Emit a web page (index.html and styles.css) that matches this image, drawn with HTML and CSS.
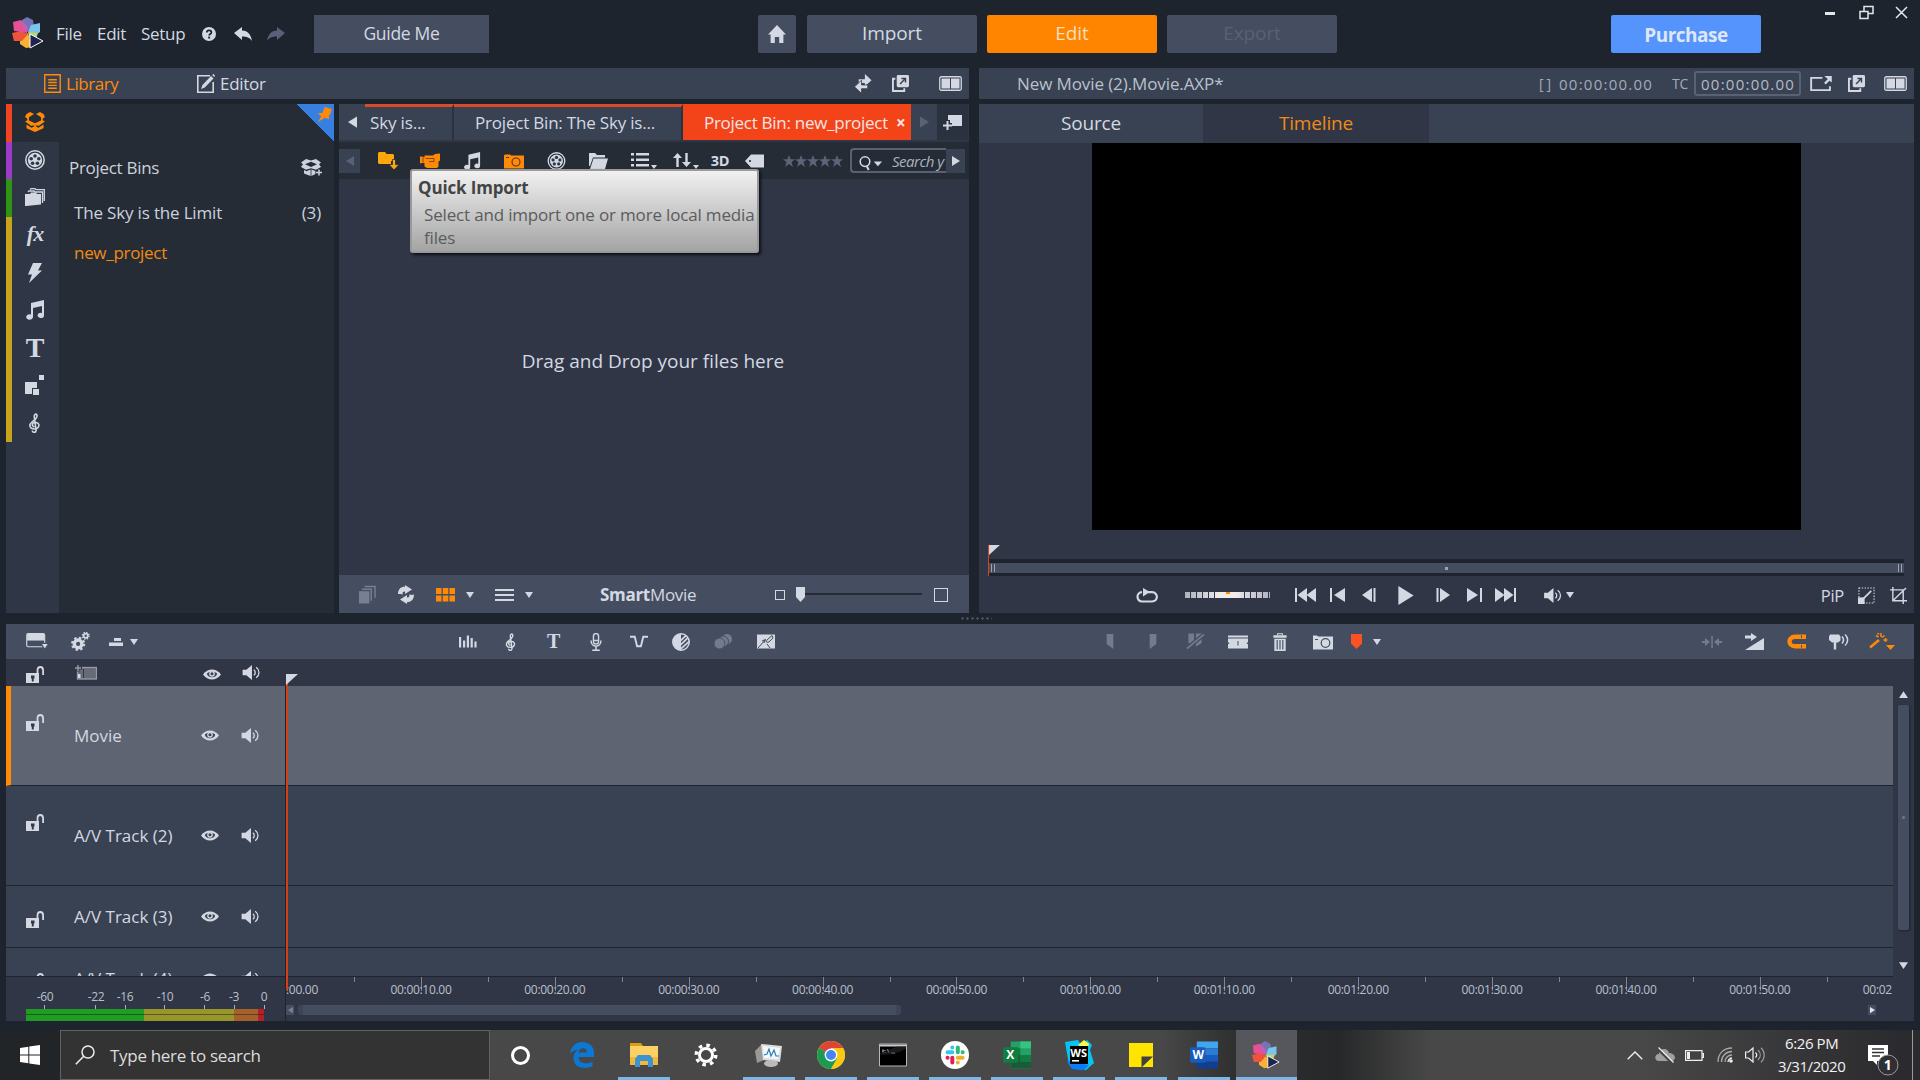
FILE: index.html
```html
<!DOCTYPE html>
<html lang="en">
<head>
<meta charset="utf-8">
<title>Video editor</title>
<link rel="stylesheet" href="styles.css">
</head>
<body>
<svg class="sprite" aria-hidden="true">
  <symbol id="flower" viewBox="0 0 32 32">
    <path fill="#7673b8" d="M10 3l5-3 6 3 1 7-7 5-5-6z"/>
    <path fill="#7cc4ea" d="M19 8l9-2v9l-6 4-6-4z"/>
    <path fill="#b9d66b" d="M16 15l10 1-2 6-6 1z"/>
    <path fill="#f9b233" d="M8 20l8-4 4 14-6 1-6-4z"/>
    <path fill="#ee5439" d="M0 16l9-2 7 3-6 7-8 0z"/>
    <path fill="#e84f96" d="M1 5l8-2 6 6 0 7-13-2z"/>
    <path fill="#b06bb4" d="M9 4l6 5 1 6-5-5z"/>
    <path fill="#1f2350" stroke="#fff" stroke-width="1" d="M18 17l13 7-13 7z"/>
  </symbol>
  <symbol id="help" viewBox="0 0 14 14"><circle cx="7" cy="7" r="7" fill="currentColor"/><path d="M4.8 5.6c0-3 4.6-2.8 4.6-.2 0 1.6-2.2 1.6-2.2 3" fill="none" stroke="#1d242d" stroke-width="1.7"/><rect x="6.2" y="9.6" width="1.9" height="1.9" fill="#1d242d"/></symbol>
  <symbol id="undo" viewBox="0 0 18 14"><path fill="currentColor" d="M0 6l8-6v3.400c6 .2 9 4 10 10.600-2.500-3.600-5-4.600-10-4.600V13z"/></symbol>
  <symbol id="home" viewBox="0 0 18 18"><path fill="currentColor" d="M9 0l9 9.500h-2.600V18h-4.200v-6H6.800v6H2.600V9.500H0z"/></symbol>
  <symbol id="library" viewBox="0 0 18 20"><path fill="none" stroke="currentColor" stroke-width="1.500" d="M.8.8h16.400v18.400H.8zM4.500 6h9M4.500 9h9M4.500 12h9M4.500 15h9"/></symbol>
  <symbol id="editor" viewBox="0 0 18 19"><path fill="none" stroke="currentColor" stroke-width="1.600" d="M13 1.800H.8v16.400h15.400V8"/><path fill="currentColor" d="M4 15l1.500-4L14 2l2.500 2.500-8.700 9z"/><path fill="currentColor" d="M15 1l1.500-1L18 1.700 17.200 3z"/></symbol>
  <symbol id="swap" viewBox="0 0 18 20"><path fill="currentColor" d="M11 0l7 6.500-7 6.500V9.500H4.500v-4H11z"/><path fill="currentColor" stroke="#394252" stroke-width=".9" d="M7.500 6.500L0 13.500l7.500 7V15.500H14v-4H7.500z"/><path fill="currentColor" d="M11 4.500v6.500l5-4.500z"/></symbol>
  <symbol id="popout" viewBox="0 0 18 18"><path fill="none" stroke="currentColor" stroke-width="2" d="M3.500 4H1v13h12v-3"/><rect x="5" y="0" width="13" height="13" rx="1.500" fill="currentColor"/><path fill="none" stroke="#394252" stroke-width="1.500" d="M8.500 9.500L14 4M10 3.700h4.300V8"/></symbol>
  <symbol id="dual" viewBox="0 0 23 15"><rect x=".75" y=".75" width="21.500" height="13.500" rx="1.500" fill="none" stroke="currentColor" stroke-width="1.300"/><path fill="currentColor" d="M2.500 2.500H11v10H2.500zM12 2.500h8.500v10H12z"/></symbol>
  <symbol id="expand" viewBox="0 0 23 16"><path fill="none" stroke="currentColor" stroke-width="2" d="M13 2H1v13h20v-4"/><path fill="currentColor" d="M15 0h8v7l-2.500-2-4 4-1.700-1.700 4-4z"/></symbol>
  <symbol id="box" viewBox="0 0 20 20"><path fill="currentColor" d="M5 0l4 2-5 3.200v2.600L0 5l1.500-3zM15 0l-4 2 5 3.200v2.600L20 5l-1.500-3zM0 9.500L3 8l7 3.200L17 8l3 1.500-6.500 4.500-3.500-1.800L6.500 14zM1.500 12.500l5 3.200L10 14l3.500 1.700 5-3.200v3.700L10 20l-8.500-3.800z"/><path fill="none" stroke="currentColor" stroke-width="1.500" d="M3 5v5l7 3.500 7-3.500V5M10 12.500V19"/></symbol>
  <symbol id="boxplus" viewBox="0 0 21 17"><path fill="currentColor" fill-rule="evenodd" d="M5 0l5 1.500L15 0l5 3.500-2 1.800L20 8l-5 2.800-5-1.500-5 1.500L0 8l2-2.700L0 3.500zM10 2.800L4 5.300 10 8l6-2.700zM3 11l2.500 1.200L9.600 10.500v6.500L3 14.500zM10.400 10.500l4 1.500v3l-4 2z"/><path stroke="currentColor" stroke-width="1.500" d="M18 10.500v6M15 13.500h6"/></symbol>
  <symbol id="pin" viewBox="0 0 16 16"><path fill="#ff8a08" d="M8 0l8 2-2 6-1.500 1 .5 4-4.500-1.500L1 16l3.500-6L1 7l5-1z"/></symbol>
  <symbol id="reel" viewBox="0 0 20 20"><circle cx="10" cy="10" r="9.200" fill="none" stroke="currentColor" stroke-width="1.500"/><circle cx="10" cy="10" r="7.200" fill="currentColor"/><g fill="#2f3646"><circle cx="10" cy="6" r="1.800"/><circle cx="13.800" cy="8.800" r="1.800"/><circle cx="12.400" cy="13.200" r="1.800"/><circle cx="7.600" cy="13.200" r="1.800"/><circle cx="6.200" cy="8.800" r="1.800"/></g></symbol>
  <symbol id="folders" viewBox="0 0 20 18"><path fill="currentColor" d="M0 6h5l1-1.500h5L12 6h4v10.500L1 18H0z"/><path fill="none" stroke="currentColor" stroke-width="1.300" d="M3 4l1-1h5l1 1h7.500v11M5 1.500L6 .7h4l1 1h8.300V13"/></symbol>
  <symbol id="bolt" viewBox="0 0 14 20"><path fill="currentColor" d="M5 0h9l-4 7.500h4L1 20l3-8.500H0z"/></symbol>
  <symbol id="note" viewBox="0 0 18 20"><path fill="currentColor" d="M5 3l13-3v15.500a3.200 2.600 0 1 1-2-2.500V6L7 8v9a3.400 2.700 0 1 1-2-2.500z"/></symbol>
  <symbol id="squares" viewBox="0 0 20 20"><path fill="currentColor" d="M14 0h5v5h-5zM0 7h12v6H7v6H0zM8 14h6v6H8z"/></symbol>
  <symbol id="clef" viewBox="0 0 14 20"><path fill="none" stroke="currentColor" stroke-width="1.600" d="M8 18c-.5 2-4 1.500-3.500-.5M8.200 18L6.300 4C6 1 8.500 0 9 2.500S6.500 7 4 9c-3.500 3-2.500 7 2.500 7s6-6 1.500-6.500-4.500 4-1.500 4.300"/></symbol>
  <symbol id="quickimport" viewBox="0 0 21 18"><path fill="currentColor" d="M0 1l1-1h6l1.500 2H15l1 1v6h-3v3H1l-1-1z"/><path fill="currentColor" stroke="#252c36" stroke-width=".8" d="M14.500 7.500h3v5H21L16 18l-5-5.500h3.500z"/></symbol>
  <symbol id="camcorder" viewBox="0 0 20 15"><path fill="currentColor" d="M4.500 2h8.500l2-1.500 5-.5v7l-1.500 1v5l-1.500 1.500H7L4.500 13V9.500H2L0 10V3h2l2.500 1z"/><path stroke="#8a4a05" stroke-width="1" fill="none" d="M3 4v5M5.500 5H14v3H9"/></symbol>
  <symbol id="photo" viewBox="0 0 20 15"><path fill="currentColor" d="M0 2l1-1h5l1 1h13v13H0z"/><circle cx="12" cy="8.500" r="4" fill="none" stroke="#50351a" stroke-width="1.100"/><path stroke="#50351a" d="M2 4h3"/></symbol>
  <symbol id="folder" viewBox="0 0 19 16"><path fill="currentColor" d="M0 0h6l2 2h8v2.500H4L1 13H0z"/><path fill="currentColor" d="M4.500 5.500H19L16 16H1z"/></symbol>
  <symbol id="list" viewBox="0 0 26 16"><path fill="currentColor" d="M0 0h3v2.500H0zM5 0h13v2.500H5zM0 5.500h3V8H0zM5 5.500h13V8H5zM0 11h3v2.500H0zM5 11h13v2.500H5zM20 12h6l-3 4z"/></symbol>
  <symbol id="sort" viewBox="0 0 26 16"><path fill="currentColor" d="M4.500 0L9 5H5.700v9H3.300V5H0zM13.500 14L9 9h3.300V0h2.400v9H18zM20 12h6l-3 4z"/></symbol>
  <symbol id="tag" viewBox="0 0 19 13"><path fill="currentColor" d="M6 0h13v13H6L0 6.500z"/><circle cx="5" cy="6.500" r="1.100" fill="#252c36"/></symbol>
  <symbol id="star" viewBox="0 0 20 20"><path fill="currentColor" d="M10 0l2.800 7H20l-5.700 4.600L16.500 20 10 15l-6.500 5 2.200-8.400L0 7h7.200z"/></symbol>
  <symbol id="addtab" viewBox="0 0 19 15"><path fill="currentColor" d="M5 0h14v11H9V8H7V5H5z"/><path stroke="currentColor" stroke-width="2" d="M4.500 6v9M0 10.500h9"/></symbol>
  <symbol id="right" viewBox="0 0 8 10"><path fill="currentColor" d="M0 0l8 5-8 5z"/></symbol>
  <symbol id="left" viewBox="0 0 8 10"><path fill="currentColor" d="M8 0L0 5l8 5z"/></symbol>
  <symbol id="down" viewBox="0 0 8 6"><path fill="currentColor" d="M0 0h8L4 6z"/></symbol>
  <symbol id="up" viewBox="0 0 8 6"><path fill="currentColor" d="M0 6h8L4 0z"/></symbol>
  <symbol id="mag" viewBox="0 0 26 17"><circle cx="6.500" cy="7" r="5.200" fill="none" stroke="currentColor" stroke-width="1.700"/><path stroke="currentColor" stroke-width="2.200" d="M8.500 12l2 4"/><path fill="currentColor" d="M16 7h9l-4.500 5z"/></symbol>
  <symbol id="stack" viewBox="0 0 18 19"><path fill="currentColor" d="M0 6h11v13H0z"/><path fill="none" stroke="currentColor" stroke-width="1.500" d="M3 4h10v12M6 1h11v12"/></symbol>
  <symbol id="refresh" viewBox="0 0 16 19"><path fill="currentColor" d="M0 9C0 4 3 1.500 7 1.700V0l7 4.500L7 9V6.500C4.500 6.500 4 8 5 9.500 3 9 1.500 9 0 9z"/><path fill="currentColor" d="M16 9.500c0 5-3 7.700-7 7.700V19l-7-4.500L9 10v2.500c2.500 0 3-1.500 2-3 2 .5 3.500.5 5 0z"/></symbol>
  <symbol id="thumbs" viewBox="0 0 19 14"><path fill="currentColor" d="M0 0h5.500v6H0zM6.800 0h5.500v6H6.800zM13.500 0H19v6h-5.500zM0 7.500h5.500v6H0zM6.800 7.500h5.500v6H6.800zM13.500 7.500H19v6h-5.500z"/></symbol>
  <symbol id="lines" viewBox="0 0 19 12"><path stroke="currentColor" stroke-width="1.800" d="M0 1h19M0 6h19M0 11h19"/></symbol>
  <symbol id="knob" viewBox="0 0 9 15"><path fill="currentColor" d="M0 0h9v10l-4.500 5L0 10z"/></symbol>
  <symbol id="loop" viewBox="0 0 22 15"><path fill="none" stroke="currentColor" stroke-width="2.200" d="M6 4.200c-6 0-6 9.300 0 9.300h10c6.500 0 6.500-9.300 0-9.300h-4"/><path fill="currentColor" d="M7 0l7 4-7 4.500z"/></symbol>
  <symbol id="tostart" viewBox="0 0 21 14"><path fill="currentColor" d="M0 0h2v14H0zM12 0v14L2.500 7zM21 0v14l-9.500-7z"/></symbol>
  <symbol id="prev" viewBox="0 0 15 14"><path fill="currentColor" d="M0 0h2v14H0zM15 0v14L4 7z"/></symbol>
  <symbol id="stepback" viewBox="0 0 15 14"><path fill="currentColor" d="M10 0v14L0 7zM11.500 0h2v14h-2z"/></symbol>
  <symbol id="play" viewBox="0 0 16 20"><path fill="currentColor" d="M0 0l16 10L0 20z"/></symbol>
  <symbol id="speaker" viewBox="0 0 19 16"><path fill="currentColor" d="M0 5h4l6-5v16l-6-5H0z"/><path fill="none" stroke="currentColor" stroke-width="1.400" d="M12 5c2 1.500 2 4.500 0 6M14.500 2.500c4 3 4 8 0 11"/></symbol>
  <symbol id="scale" viewBox="0 0 18 18"><rect x="1" y="1" width="16" height="16" fill="none" stroke="currentColor" stroke-width="1.200" stroke-dasharray="1.500 1.500"/><path fill="currentColor" d="M0 11h7v7H0z"/><path stroke="currentColor" stroke-width="1.800" d="M6 12l8-8"/></symbol>
  <symbol id="crop" viewBox="0 0 18 18"><path fill="none" stroke="currentColor" stroke-width="1.500" d="M3 0v14.500h15M0 3h14v15M3 14.500L17 1"/></symbol>
  <symbol id="tlview" viewBox="0 0 24 18"><rect x=".6" y=".6" width="19" height="14" rx="1.500" fill="none" stroke="currentColor" stroke-width="1.200"/><path fill="currentColor" d="M1 1h18.500v7H1z"/><path fill="currentColor" stroke="#454e60" stroke-width="1.300" d="M15.500 11H24l-4.200 6.500z"/></symbol>
  <symbol id="gears" viewBox="0 0 20 20"><circle cx="7.500" cy="12.500" r="4" fill="none" stroke="currentColor" stroke-width="3.600"/><circle cx="7.500" cy="12.500" r="6.400" fill="none" stroke="currentColor" stroke-width="2.200" stroke-dasharray="2.500 2.530"/><circle cx="15.500" cy="4" r="2.200" fill="none" stroke="currentColor" stroke-width="1.800"/><circle cx="15.500" cy="4" r="3.500" fill="none" stroke="currentColor" stroke-width="1.500" stroke-dasharray="1.400 1.350"/></symbol>
  <symbol id="tracks" viewBox="0 0 14 8"><path fill="currentColor" d="M5 0h7v3H5zM0 4.500h14V8H0z"/></symbol>
  <symbol id="mixer" viewBox="0 0 18 12"><path fill="currentColor" d="M0 1.500h2.200V12H0zM4 5h2.200v7H4zM7.800 0H10v12H7.800zM11.600 2.500h2.200V12h-2.200zM15.400 6h2.200v6h-2.200z"/></symbol>
  <symbol id="mic" viewBox="0 0 12 19"><rect x="3.300" y=".7" width="5.400" height="11" rx="2.700" fill="none" stroke="currentColor" stroke-width="1.500"/><path fill="none" stroke="currentColor" stroke-width="1.600" d="M.8 8c0 8 10.400 8 10.400 0M6 14v4M2 18.200h8M4 8h4"/></symbol>
  <symbol id="duck" viewBox="0 0 19 12"><path fill="none" stroke="currentColor" stroke-width="2" d="M0 1h5l2.500 10h4L14 1h5"/></symbol>
  <symbol id="mask" viewBox="0 0 19 19"><circle cx="9.500" cy="9.500" r="8.700" fill="none" stroke="currentColor" stroke-width="1.500"/><path fill="currentColor" d="M9.500.8a8.700 8.700 0 0 0 0 17.400z"/><path stroke="currentColor" stroke-width="1.800" d="M9 8l6-5.500M9 12.500l8-7.500M9 17l9-8"/></symbol>
  <symbol id="blobs" viewBox="0 0 19 16"><g fill="currentColor" stroke="#454e60"><circle cx="13" cy="5.500" r="5.500"/><circle cx="9" cy="8" r="5.500"/><circle cx="5.500" cy="10" r="5.500"/></g></symbol>
  <symbol id="paint" viewBox="0 0 18 14"><path fill="currentColor" d="M0 0h18v14H0z"/><path fill="none" stroke="#454e60" stroke-width="1" d="M1 13.500L8.500 5 5 6.500M8.500 5L7 8.500M15 1l-5 4.500c-2 3 1 3 3 1L16 3.500zM10 9.500l3 4"/></symbol>
  <symbol id="markin" viewBox="0 0 8 18"><path fill="currentColor" d="M0 0h8v18l-8-6z"/></symbol>
  <symbol id="markout" viewBox="0 0 8 18"><path fill="currentColor" d="M0 0h8v12l-8 6z"/></symbol>
  <symbol id="razor" viewBox="0 0 20 17"><path fill="currentColor" d="M2.500 0h6v13l-6-3zM10.500 0h6v10l-6 4z"/><path stroke="#454e60" stroke-width="4.500" d="M1 16L19 1"/><path stroke="currentColor" stroke-width="1.900" d="M1 16L19 1"/></symbol>
  <symbol id="trim" viewBox="0 0 20 13"><path fill="currentColor" d="M0 0h20v2H0zM0 3h20v10H0z"/><path fill="#454e60" d="M9.500 5.500h1v4.500h-1zM0 7h1.200v1.500H0zM18.800 7H20v1.500h-1.200z"/></symbol>
  <symbol id="trash" viewBox="0 0 14 19"><path fill="none" stroke="currentColor" stroke-width="1.200" d="M4.500 2.500V.8h5v1.700"/><path fill="currentColor" d="M0 2.500h14V5H0zM1 6h12v13H1z"/><path stroke="#454e60" stroke-width="1.200" d="M4 7.500v10M7 7.500v10M10 7.500v10"/></symbol>
  <symbol id="snap" viewBox="0 0 20 15"><path fill="currentColor" d="M0 1h4l1 1h15v13H0z"/><circle cx="12.500" cy="8.500" r="4.300" fill="none" stroke="#454e60" stroke-width="1.200"/><path stroke="#454e60" d="M2 5h3"/></symbol>
  <symbol id="marker" viewBox="0 0 11 15"><path fill="#fb5224" d="M0 0h11v9.500L5.500 15 0 9.500z"/></symbol>
  <symbol id="close-gap" viewBox="0 0 20 12"><path fill="currentColor" d="M9.300 0h1.500v12H9.300zM0 5h3V2l5 4-5 4V7H0zM20 5h-3V2l-5 4 5 4V7h3z"/></symbol>
  <symbol id="smart" viewBox="0 0 19 17"><path fill="currentColor" d="M19 5v12H0zM0 2.500h6V0l6 4-6 4V5.500H0z"/></symbol>
  <symbol id="magnet" viewBox="0 0 19 14"><path fill="none" stroke="currentColor" stroke-width="4.400" d="M19 2.200H8c-7.300 0-7.300 9.600 0 9.600h11"/><path stroke="#454e60" stroke-width="1" d="M14.500 .8v2.800M14.500 10.400v2.800"/></symbol>
  <symbol id="scrubaudio" viewBox="0 0 20 15"><path fill="currentColor" d="M1 0h9l1.500 2v4L9 8H7.200v7H4.800V8H3L0 5.500V2z"/><path fill="none" stroke="currentColor" stroke-width="1.500" d="M13 2c2 2 2 5 0 7M16 0c3.500 3 3.500 8 0 11"/></symbol>
  <symbol id="wand" viewBox="0 0 26 17"><path stroke="currentColor" stroke-width="2.500" d="M1 14.500L10 7"/><path stroke="currentColor" stroke-width="1.500" d="M12 0v4M14.500 7h4M16.500 5v4M7 2.500l2.500 1.500M13 4.500l2.500-2M8.500 0l1.500 1.500"/><path fill="currentColor" d="M17 12h9l-4.500 5z"/></symbol>
  <symbol id="lock" viewBox="0 0 18 17"><path fill="currentColor" d="M0 7h13v10H0z"/><path fill="none" stroke="currentColor" stroke-width="1.800" d="M11.500 7V4.500c0-4.700 5.600-4.700 5.600 0V9"/><path fill="#2f3646" d="M5 9.500h3.500v3H7.700v3H5.800v-3H5z"/></symbol>
  <symbol id="addtrack" viewBox="0 0 22 15"><rect x="2.500" y="2.500" width="19" height="11.500" fill="#666b75" stroke="currentColor" stroke-width="1.300"/><path stroke="#2f3646" stroke-width="3" d="M3 0v6.500M0 3h7"/><path stroke="currentColor" stroke-width="1.400" d="M3 0v6M0 3h6"/><path stroke="#2f3646" stroke-width="1" d="M8.500 4v9"/><path fill="#d3d8e2" d="M3 9h2.500v4H3z"/></symbol>
  <symbol id="eye" viewBox="0 0 18 11"><path fill="currentColor" d="M0 5.500C5-1.300 13-1.300 18 5.500c-5 6.800-13 6.800-18 0z"/><path fill="#394252" d="M4 4.500C5.500 2 12.500 2 14 4.500c0 5-10 5-10 0z"/><circle cx="9" cy="4.800" r="2.200" fill="none" stroke="currentColor" stroke-width="1.300"/></symbol>
  <symbol id="flag" viewBox="0 0 12 11"><path fill="currentColor" d="M0 0h12L0 11z"/></symbol>
  <symbol id="win" viewBox="0 0 20 20"><path fill="#fff" d="M0 3l8.300-1.200v7.700H0zM9.300 1.600L20 0v9.500H9.300zM0 10.500h8.300v7.700L0 17zM9.300 10.500H20V20L9.300 18.400z"/></symbol>
  <symbol id="tsearch" viewBox="0 0 20 20"><circle cx="13" cy="7" r="6" fill="none" stroke="#eee" stroke-width="1.500"/><path stroke="#eee" stroke-width="1.600" d="M8.500 11.500L.8 19.200"/></symbol>
  <symbol id="edge" viewBox="0 0 24 26"><path fill="#0a78d4" d="M0 12C1 4 6 0 12 0c8 0 12 5 12 11v4H8.500c0 7 9 8 14 4.500V24c-6 3.500-19 3-19-8 0-4 2-7 5-8.500C6 7.800 2 9 0 12zm8.500-1.500H17C17 4.500 9 5 8.500 10.500z"/></symbol>
  <symbol id="explorer" viewBox="0 0 28 24"><path fill="#d99c13" d="M0 0h11l2 3H0z"/><path fill="#fcd065" d="M0 3h28v18H0z"/><path fill="#f0b93c" d="M0 14h28v8H0z"/><path fill="#3d93cf" d="M5 24v-8l3-4h12l3 4v8h-5v-6h-8v6z"/></symbol>
  <symbol id="cog" viewBox="0 0 24 24"><circle cx="12" cy="12" r="6.500" fill="none" stroke="#fff" stroke-width="3"/><circle cx="12" cy="12" r="9.800" fill="none" stroke="#fff" stroke-width="3.400" stroke-dasharray="3.500 4.200"/></symbol>
  <symbol id="monitor" viewBox="0 0 28 26"><path fill="#999" d="M0 9l7-7 2 16-7 3z"/><path fill="#ddd" d="M6 2l21 2-2 16-17-2z"/><path fill="#f6f8fa" d="M8 4l17 2-2 11-14-1z"/><path fill="none" stroke="#257fbc" stroke-width="1.200" d="M9 13l3-1 2-5 2 7 3-6 2 6h3"/><ellipse cx="16" cy="21.500" rx="7" ry="3.500" fill="#bbb"/></symbol>
  <symbol id="chrome" viewBox="0 0 28 28"><circle cx="14" cy="14" r="14" fill="#fbc816"/><path fill="#db4437" d="M14 14L1.900 7A14 14 0 0 1 26.100 7H14z"/><path fill="#199a55" d="M1.900 7A14 14 0 0 0 14 28l6-10.500-6-3.500z"/><path fill="#fbc816" d="M26.100 7A14 14 0 0 1 14 28l6-10V7z"/><circle cx="14" cy="14" r="6.400" fill="#fff"/><circle cx="14" cy="14" r="5" fill="#4285f4"/></symbol>
  <symbol id="term" viewBox="0 0 28 23"><path fill="#000" stroke="#b5b8bc" d="M.5.5h27v22H.5z"/><path fill="#c8cbd0" d="M1 1h26v2H1z"/><path stroke="#ccc" stroke-width="1.200" d="M4 6v3M6 6.500v.8M6 8.500v.8M8.500 6l1.500 3M12 9.500h4"/><path fill="#252525" d="M1 11c9 1 18-1 26-6v-2H18L1 10z" opacity=".7"/></symbol>
  <symbol id="slack" viewBox="0 0 28 28"><circle cx="14" cy="14" r="14" fill="#fff"/><g fill="none" stroke-width="4" stroke-linecap="round"><path stroke="#36c5f0" d="M11.300 6.500v.1M6.500 11.300h4.800"/><path stroke="#2eb67d" d="M16.800 6.500v4.800M21.600 11.300h.1"/><path stroke="#ecb22e" d="M16.800 16.800h4.800M16.800 21.500v.1"/><path stroke="#e01e5a" d="M11.300 16.800v4.800M6.500 16.800h.1"/></g></symbol>
  <symbol id="excel" viewBox="0 0 29 28"><path fill="#21a366" d="M8 0h21v28H8z"/><path fill="#33c481" d="M18 0h11v7H18z"/><path fill="#107c41" d="M8 7h10v7H8zM18 14h11v7H18z"/><path fill="#185c37" d="M8 14h10v7h11v7H8z"/><rect y="6" width="16" height="16" rx="1.500" fill="#107c41"/></symbol>
  <symbol id="word" viewBox="0 0 29 28"><path fill="#41a5ee" d="M7 0h22v7H7z"/><path fill="#2b7cd3" d="M7 7h22v7H7z"/><path fill="#185abd" d="M7 14h22v7H7z"/><path fill="#103f91" d="M7 21h22v7H7z"/><rect y="6" width="16" height="16" rx="1.500" fill="#185abd"/></symbol>
  <symbol id="storm" viewBox="0 0 30 30"><path fill="#07c3f2" d="M1 2l13-2 3 5 6-5 5 5-2 5 4 13-8 7-12-1-5-4z"/><path fill="#fcf84a" d="M14 5l6-5 5 4-2 6z"/><path fill="#087cfa" d="M3 21l22 4-5 5-12-1z"/><path fill="#000" d="M6 6h18v18H6z"/><path fill="#fff" d="M8 20h7v1.600H8z"/></symbol>
  <symbol id="sticky" viewBox="0 0 23 23"><path fill="#ffe400" d="M0 0h23v23H0z"/><path fill="#404040" d="M12 13h11L12.500 23H12z"/></symbol>
  <symbol id="chev" viewBox="0 0 16 9"><path fill="none" stroke="#eee" stroke-width="1.400" d="M.7 8.200L8 1l7.300 7.200"/></symbol>
  <symbol id="cloud" viewBox="0 0 20 16"><path fill="#a0a0a0" d="M4 14C-1 14-1 7 4 7c0-6 9-7 10-1 7 0 8 8 2 8z"/><path stroke="#444" stroke-width="2.500" d="M3 2l14 14"/><path stroke="#eee" stroke-width="1.300" d="M3.500.5l15 15"/></symbol>
  <symbol id="battery" viewBox="0 0 19 11"><path fill="none" stroke="#eee" stroke-width="1.200" d="M.6.600h16.400v9.800H.6zM17 3.500h1.400v4H17"/><path fill="#eee" d="M2 2h3v7H2z"/></symbol>
  <symbol id="wifi" viewBox="0 0 16 16"><g fill="none" stroke="#aaa" stroke-width="1.300"><path d="M1 15C1 6 7 1 15 1M4.500 15C4.500 9 9 4.500 15 4.500M8 15c0-4 3-7 7-7"/><path stroke="#eee" d="M11 15c0-2 2-4 4-4"/></g><circle cx="14" cy="14" r="1.800" fill="#eee"/></symbol>
  <symbol id="tvol" viewBox="0 0 20 16"><path fill="none" stroke="#eee" stroke-width="1.200" d="M.6 5h3L8 1v14l-4.400-4h-3z"/><path fill="none" stroke="#eee" stroke-width="1.200" d="M10.500 5.500c1.500 1.500 1.500 3.500 0 5"/><path fill="none" stroke="#999" stroke-width="1.200" d="M13 3c3 3 3 7 0 10M16 .800c4.300 4 4.300 10.400 0 14.400"/></symbol>
  <symbol id="notif" viewBox="0 0 31 31"><path fill="#fff" d="M0 0h20v16H9v4l-4-4H0z"/><path stroke="#333" stroke-width="1.400" d="M4 4h12M4 7.500h12M4 11h8"/><circle cx="20" cy="20" r="10" fill="#303033" stroke="#999"/></symbol>
</svg>

<header class="topbar">
  <svg class="logo"><use href="#flower"/></svg>
  <nav class="menu">
    <span class="m-file">File</span><span class="m-edit">Edit</span><span class="m-setup">Setup</span>
    <svg class="i-help"><use href="#help"/></svg>
    <svg class="i-undo"><use href="#undo"/></svg>
    <svg class="i-undo redo"><use href="#undo"/></svg>
  </nav>
  <button class="guide">Guide Me</button>
  <div class="modes">
    <button class="home"><svg><use href="#home"/></svg></button>
    <button class="mode">Import</button>
    <button class="mode on">Edit</button>
    <button class="mode off">Export</button>
  </div>
  <button class="purchase">Purchase</button>
  <svg class="winctl" viewBox="0 0 90 20"><g fill="none" stroke="#e4e6ea" stroke-width="1.500"><path stroke-width="3" d="M4 10.500h10"/><path d="M39 8.500h8v7h-8zM43 8.500v-5h9v7h-5M75 4l11 11M86 4L75 15"/></g></svg>
</header>

<main class="work">
  <section class="left">
    <div class="phead">
      <span class="ptab lib"><svg><use href="#library"/></svg>Library</span>
      <span class="ptab edt"><svg><use href="#editor"/></svg>Editor</span>
      <span class="pic"><svg class="i-swap"><use href="#swap"/></svg><svg class="i-pop"><use href="#popout"/></svg><svg class="i-dual"><use href="#dual"/></svg></span>
    </div>
    <div class="lbody">
      <aside class="side">
        <div class="cols"><i class="red"></i><i class="purple"></i><i class="green"></i><i class="gold"></i></div>
        <div class="cats">
          <span class="cat sel"><svg><use href="#box"/></svg></span>
          <span class="cat"><svg><use href="#reel"/></svg></span>
          <span class="cat"><svg><use href="#folders"/></svg></span>
          <span class="cat fx">fx</span>
          <span class="cat"><svg><use href="#bolt"/></svg></span>
          <span class="cat"><svg><use href="#note"/></svg></span>
          <span class="cat tt">T</span>
          <span class="cat"><svg><use href="#squares"/></svg></span>
          <span class="cat"><svg><use href="#clef"/></svg></span>
        </div>
        <div class="bins">
          <div class="corner"><svg><use href="#pin"/></svg></div>
          <div class="binhead"><span>Project Bins</span><svg><use href="#boxplus"/></svg></div>
          <div class="bin first"><span>The Sky is the Limit</span><span>(3)</span></div>
          <div class="bin cur"><span>new_project</span></div>
        </div>
      </aside>
      <div class="browser">
        <div class="tabs">
          <span class="tnav"><svg><use href="#left"/></svg></span>
          <span class="tab t1">Sky is...</span>
          <span class="tab t2">Project Bin: The Sky is...</span>
          <span class="tab t3">Project Bin: new_project<b>×</b></span>
          <span class="tnav dim"><svg><use href="#right"/></svg></span>
          <span class="tadd"><svg><use href="#addtab"/></svg></span>
        </div>
        <div class="btools">
          <span class="bnav dim"><svg><use href="#left"/></svg></span>
          <span class="bt amber"><svg class="s21"><use href="#quickimport"/></svg></span>
          <span class="bt org"><svg class="s20"><use href="#camcorder"/></svg></span>
          <span class="bt"><svg class="s20"><use href="#note"/></svg></span>
          <span class="bt org"><svg class="s20"><use href="#photo"/></svg></span>
          <span class="bt"><svg class="s19"><use href="#reel"/></svg></span>
          <span class="bt"><svg class="s19"><use href="#folder"/></svg></span>
          <span class="bt w48"><svg class="s26"><use href="#list"/></svg></span>
          <span class="bt w35"><svg class="s26"><use href="#sort"/></svg></span>
          <span class="bt w34 d3">3D</span>
          <span class="bt w34"><svg class="s19"><use href="#tag"/></svg></span>
          <span class="stars"><svg><use href="#star"/></svg><svg><use href="#star"/></svg><svg><use href="#star"/></svg><svg><use href="#star"/></svg><svg><use href="#star"/></svg></span>
          <span class="search"><svg><use href="#mag"/></svg><em>Search y</em></span>
          <span class="bnav"><svg><use href="#right"/></svg></span>
        </div>
        <div class="drop">Drag and Drop your files here</div>
        <div class="bfoot">
          <span class="f1"><svg><use href="#stack"/></svg></span>
          <span class="f2"><svg><use href="#refresh"/></svg></span>
          <span class="f3"><svg><use href="#thumbs"/></svg></span>
          <svg class="dn"><use href="#down"/></svg>
          <span class="f4"><svg><use href="#lines"/></svg></span>
          <svg class="dn"><use href="#down"/></svg>
          <span class="smart"><b>Smart</b>Movie</span>
          <i class="sq"></i>
          <span class="slider"><svg><use href="#knob"/></svg></span>
          <i class="sq big"></i>
        </div>
        <div class="tip"><b>Quick Import</b><p>Select and import one or more local media files</p></div>
      </div>
    </div>
  </section>

  <section class="right">
    <div class="phead">
      <span class="title">New Movie (2).Movie.AXP*</span>
      <span class="br">[ ]</span><span class="tc">00:00:00.00</span><span class="tcl">TC</span><span class="tc box">00:00:00.00</span>
      <span class="ric"><svg class="i-exp"><use href="#expand"/></svg><svg class="i-pop"><use href="#popout"/></svg><svg class="i-dual"><use href="#dual"/></svg></span>
    </div>
    <div class="vtabs"><span>Source</span><span class="on">Timeline</span></div>
    <div class="viewer">
      <div class="video"></div>
      <div class="scrub">
        <svg class="sflag"><use href="#flag"/></svg>
        <div class="strip"><div class="bar"><i></i><i class="dot"></i><i></i></div></div>
      </div>
      <div class="transport">
        <svg class="p-loop"><use href="#loop"/></svg>
        <span class="jog"></span>
        <span class="pc w34b"><svg class="w21"><use href="#tostart"/></svg></span>
        <span class="pc w30"><svg class="w15"><use href="#prev"/></svg></span>
        <span class="pc w34b"><svg class="w15"><use href="#stepback"/></svg></span>
        <span class="pc w40"><svg class="w16"><use href="#play"/></svg></span>
        <span class="pc w34b"><svg class="w15 flip"><use href="#stepback"/></svg></span>
        <span class="pc w30"><svg class="w15 flip"><use href="#prev"/></svg></span>
        <span class="pc w34b"><svg class="w21 flip"><use href="#tostart"/></svg></span>
        <svg class="p-vol"><use href="#speaker"/></svg><svg class="dn"><use href="#down"/></svg>
        <span class="pip">PiP</span>
        <svg class="p-sc"><use href="#scale"/></svg><svg class="p-cr"><use href="#crop"/></svg>
      </div>
    </div>
  </section>
</main>

<div class="grip"></div>

<section class="timeline">
  <div class="ttools">
    <svg class="g1"><use href="#tlview"/></svg><svg class="g2"><use href="#gears"/></svg><svg class="g3"><use href="#tracks"/></svg><svg class="dn"><use href="#down"/></svg>
    <div class="grp a">
      <span><svg class="q18"><use href="#mixer"/></svg></span><span><svg class="q20"><use href="#clef"/></svg></span><span class="tser">T</span><span><svg class="q20"><use href="#mic"/></svg></span><span><svg class="q18"><use href="#duck"/></svg></span><span><svg class="q20"><use href="#mask"/></svg></span><span class="faint"><svg class="q19"><use href="#blobs"/></svg></span><span><svg class="q18"><use href="#paint"/></svg></span>
    </div>
    <div class="grp b">
      <span class="faint"><svg class="q18"><use href="#markin"/></svg></span><span class="faint"><svg class="q18"><use href="#markout"/></svg></span><span class="faint"><svg class="q19"><use href="#razor"/></svg></span><span><svg class="q20"><use href="#trim"/></svg></span><span><svg class="q20"><use href="#trash"/></svg></span><span><svg class="q20"><use href="#snap"/></svg></span>
    </div>
    <svg class="mk"><use href="#marker"/></svg><svg class="dn"><use href="#down"/></svg>
    <div class="grp c">
      <span class="faint"><svg class="q20"><use href="#close-gap"/></svg></span><span><svg class="q19"><use href="#smart"/></svg></span><span class="org"><svg class="q19"><use href="#magnet"/></svg></span><span><svg class="q20"><use href="#scrubaudio"/></svg></span><span class="org"><svg class="q26"><use href="#wand"/></svg></span>
    </div>
  </div>
  <div class="thead">
    <svg class="lock"><use href="#lock"/></svg><svg class="addt"><use href="#addtrack"/></svg><svg class="eye"><use href="#eye"/></svg><svg class="spk"><use href="#speaker"/></svg>
  </div>
  <div class="tbody">
    <div class="trackarea">
      <div class="track movie"><div class="th"><svg class="lock up"><use href="#lock"/></svg><span>Movie</span><svg class="eye"><use href="#eye"/></svg><svg class="spk"><use href="#speaker"/></svg></div></div>
      <div class="track tall"><div class="th"><svg class="lock up"><use href="#lock"/></svg><span>A/V Track (2)</span><svg class="eye"><use href="#eye"/></svg><svg class="spk"><use href="#speaker"/></svg></div></div>
      <div class="track short"><div class="th"><svg class="lock lo"><use href="#lock"/></svg><span>A/V Track (3)</span><svg class="eye"><use href="#eye"/></svg><svg class="spk"><use href="#speaker"/></svg></div></div>
      <div class="track cut"><div class="th"><svg class="lock lo"><use href="#lock"/></svg><span>A/V Track (4)</span><svg class="eye"><use href="#eye"/></svg><svg class="spk"><use href="#speaker"/></svg></div></div>
    </div>
    <div class="vscroll"><svg><use href="#up"/></svg><i></i><svg><use href="#down"/></svg></div>
  </div>
  <div class="tfoot">
    <div class="meter">
      <svg class="mscale" viewBox="0 0 280 32"><g class="mtext"><text x="39" y="24">-60</text><text x="90" y="24">-22</text><text x="119" y="24">-16</text><text x="159" y="24">-10</text><text x="199" y="24">-6</text><text x="228" y="24">-3</text><text x="258" y="24">0</text></g><path stroke="#a9b0bc" d="M38.500 28v4M89.500 28v4M119.500 28v4M158.500 28v4M198.500 28v4M228.500 28v4M258.500 28v4"/></svg>
      <div class="leds"><i class="lg"></i><i class="ly"></i><i class="lb"></i><i class="lr"></i></div>
    </div>
    <div class="rulerwrap">
      <div class="ruler">
        <span class="r0">:00.00</span><span>00:00:10.00</span><span>00:00:20.00</span><span>00:00:30.00</span><span>00:00:40.00</span><span>00:00:50.00</span><span>00:01:00.00</span><span>00:01:10.00</span><span>00:01:20.00</span><span>00:01:30.00</span><span>00:01:40.00</span><span>00:01:50.00</span><span class="r12">00:02</span>
      </div>
      <div class="hscroll"><b><svg><use href="#left"/></svg></b><i></i><b class="hr"><svg><use href="#right"/></svg></b></div>
    </div>
  </div>
  <div class="playhead"><svg><use href="#flag"/></svg></div>
</section>

<footer class="taskbar">
  <span class="start"><svg><use href="#win"/></svg></span>
  <div class="tsearch"><svg><use href="#tsearch"/></svg>Type here to search</div>
  <div class="apps">
    <span><i class="ring"></i></span>
    <span><svg class="a26"><use href="#edge"/></svg></span>
    <span class="run"><svg class="a28"><use href="#explorer"/></svg></span>
    <span><svg class="a24"><use href="#cog"/></svg></span>
    <span class="run"><svg class="a28"><use href="#monitor"/></svg></span>
    <span class="run"><svg class="a28"><use href="#chrome"/></svg></span>
    <span class="run"><svg class="a28"><use href="#term"/></svg></span>
    <span class="run"><svg class="a28"><use href="#slack"/></svg></span>
    <span class="run"><svg class="a28"><use href="#excel"/></svg><b class="ltr">X</b></span>
    <span class="run"><svg class="a30"><use href="#storm"/></svg><b class="ltr ws">WS</b></span>
    <span class="run"><svg class="a23"><use href="#sticky"/></svg></span>
    <span class="run"><svg class="a28"><use href="#word"/></svg><b class="ltr">W</b></span>
    <span class="run active"><svg class="a28"><use href="#flower"/></svg></span>
  </div>
  <div class="tray">
    <span><svg class="y1"><use href="#chev"/></svg></span><span><svg class="y2"><use href="#cloud"/></svg></span><span><svg class="y3"><use href="#battery"/></svg></span><span><svg class="y4"><use href="#wifi"/></svg></span><span><svg class="y5"><use href="#tvol"/></svg></span>
  </div>
  <div class="clock"><span>6:26 PM</span><span>3/31/2020</span></div>
  <div class="notif"><svg><use href="#notif"/></svg><b>1</b></div>
</footer>
</body>
</html>
```
FILE: styles.css
```css
* { box-sizing: border-box; }
body { margin: 0; width: 1920px; height: 1080px; overflow: hidden; position: relative; display: flex; flex-direction: column; background: #1d242d; color: #d3d8e2; font-family: "Open Sans", "Noto Sans", sans-serif; font-size: 17px; letter-spacing: -0.3px; white-space: nowrap; }
svg { display: block; flex: none; overflow: visible; }
.sprite { position: absolute; width: 0; height: 0; }
button { font: inherit; letter-spacing: inherit; border: 0; padding: 0 0 2px; color: inherit; display: flex; align-items: center; justify-content: center; }
.dn { width: 8px; height: 6px; }
.org { color: #ff8a08; }
.dim { color: #596273; }

/* top bar */
.topbar { height: 68px; flex: none; display: flex; align-items: center; position: relative; }
.logo { width: 32px; height: 32px; margin: -3px 0 0 12px; }
.menu { display: flex; align-items: center; width: 270px; padding: 0 0 1px 12px; height: 68px; }
.menu span { padding-bottom: 1px; }
.m-file { width: 41px; }
.m-edit { width: 44px; }
.m-setup { width: 61px; }
.i-help { width: 14px; height: 14px; margin-right: 18px; }
.i-undo { width: 18px; height: 14px; margin-right: 15px; }
.redo { transform: scaleX(-1); color: #596077; }
.guide { width: 175px; height: 38px; background: #454e60; font-size: 17.500px; }
.modes { display: flex; margin-left: 269px; gap: 10px; }
.home { width: 38px; height: 38px; background: #454e60; border-radius: 2px; margin-right: 1px; padding-bottom: 0; }
.home svg { width: 18px; height: 18px; }
.mode { width: 170px; height: 38px; background: #454e60; border-radius: 2px; font-size: 19px; letter-spacing: -0.1px; }
.mode.on { background: #ff8400; color: #f5dfbe; }
.mode.off { color: #596173; }
.purchase { margin-left: 274px; width: 150px; height: 38px; background: #5494fc; border-radius: 2px; font-weight: 700; font-size: 19px; padding: 1px 0 0; letter-spacing: -0.5px; color: #dfe6f5; }
.winctl { width: 90px; height: 20px; margin: -42px 0 0 60px; }

/* workspace */
.work { display: flex; gap: 10px; padding-left: 6px; height: 545px; flex: none; }
.left { width: 963px; }
.right { width: 935px; }
.phead { height: 31px; margin-bottom: 5px; background: #394252; display: flex; align-items: center; }
.ptab { display: flex; align-items: center; gap: 5px; }
.lib { color: #ff8a08; margin-left: 38px; width: 153px; letter-spacing: -0.45px; }
.lib svg { width: 17px; height: 19px; }
.edt { width: 657px; }
.edt svg { width: 18px; height: 19px; }
.pic { display: flex; align-items: center; }
.i-swap { width: 18px; height: 19px; margin-right: 20px; }
.i-pop { width: 17px; height: 17px; margin-right: 30px; }
.i-dual { width: 23px; height: 15px; }

.lbody { display: flex; gap: 5px; height: 509px; }
.side { width: 328px; display: flex; background: #252c36; }
.cols { width: 6px; display: flex; flex-direction: column; background: #2f3646; }
.red { height: 38px; background: #ef4523; }
.purple { height: 37px; background: #9b3bc8; }
.green { height: 38px; background: #2f9413; }
.gold { height: 225px; background: #c6a51d; }
.cats { width: 47px; background: #2f3646; }
.cat { height: 37.600px; display: flex; align-items: center; justify-content: center; padding: 0 1px 1px 0; }
.cat svg { width: 20px; height: 20px; }
.cat.sel { background: #252c36; color: #ff8a08; }
.fx { font: italic bold 22px "Liberation Serif", serif; letter-spacing: -1px; padding-bottom: 4px; }
.tt { font: bold 28px "Liberation Serif", serif; }
.bins { flex: 1; position: relative; color: #ccd2dd; }
.corner { position: absolute; right: 0; top: 0; width: 37px; height: 37px; background: linear-gradient(to top right, transparent 50%, #377fe0 50%); }
.corner svg { width: 15px; height: 15px; margin: 3px 0 0 20px; }
.binhead { margin: 50px 12px 0 10px; height: 26px; display: flex; justify-content: space-between; align-items: center; }
.binhead svg { width: 21px; height: 17px; }
.bin { margin: 0 13px 0 15px; height: 40px; display: flex; align-items: center; justify-content: space-between; }
.bin.first { margin-top: 12px; letter-spacing: -0.17px; }
.cur { color: #f08a14; }

.browser { width: 630px; background: #303646; position: relative; display: flex; flex-direction: column; }
.tabs { height: 38px; display: flex; align-items: flex-start; }
.tabs > span { height: 36px; display: flex; align-items: center; }
.tnav { width: 26px; justify-content: center; background: #394252; }
.tnav svg { width: 9px; height: 12px; }
.tabs > .tab { background: #394252; border-top: 3px solid #dd4a2b; border-right: 2px solid #2b323f; padding-bottom: 2px; }
.t1 { width: 89px; padding-left: 5px; letter-spacing: -0.15px; }
.t2 { width: 229px; padding-left: 21px; letter-spacing: -0.2px; }
.tabs > .t3 { width: 228px; padding-left: 21px; background: #f34318; border-color: #f34318; color: #f3e5e5; letter-spacing: -0.28px; }
.t3 b { margin-left: 8px; font-size: 17px; }
.tadd { width: 31px; justify-content: center; background: #2b323f; }
.tadd svg { width: 19px; height: 15px; }
.btools { height: 37px; background: #252c36; display: flex; align-items: center; }
.bnav { width: 21px; height: 24px; background: #394252; display: flex; align-items: center; justify-content: center; }
.bnav svg { width: 8px; height: 10px; }
.bnav:first-child { margin-right: 7px; }
.bt { width: 42px; display: flex; justify-content: center; align-items: center; }
.bt svg { height: 18px; }
.w48 { width: 49px; } .w35 { width: 35px; } .w34 { width: 34px; }
.amber { color: #ffa70a; }
.s21 { width: 21px; } .s20 { width: 20px; } .s19 { width: 19px; } .s26 { width: 26px; }
.d3 { font-size: 14.500px; font-weight: 700; }
.stars { display: flex; margin: 0 7px 0 12px; color: #5b6478; width: 60px; }
.stars svg { width: 12px; height: 12px; }
.search { width: 96px; height: 25px; border: 2px solid #596273; border-right: 0; border-radius: 4px 0 0 4px; display: flex; align-items: center; overflow: hidden; }
.search svg { width: 24px; height: 16px; margin: 4px 9px 0 7px; }
.search em { font-size: 15px; letter-spacing: -0.5px; color: #abb2c0; }
.search + .bnav { width: 19px; }
.drop { flex: 1; display: flex; justify-content: center; padding: 169px 2px 0 0; align-items: flex-start; font-size: 19px; letter-spacing: 0; }
.bfoot { height: 38px; background: #454e60; display: flex; align-items: center; padding-top: 1px; }
.f1 { margin-left: 20px; width: 39px; color: #778091; }
.f1 svg { width: 17px; height: 19px; }
.f2 { width: 38px; } .f2 svg { width: 16px; height: 19px; }
.f3 { width: 30px; color: #ff8a08; } .f3 svg { width: 19px; height: 14px; }
.f4 { width: 30px; margin-left: 21px; } .f4 svg { width: 19px; height: 12px; }
.smart { margin-left: 67px; width: 175px; }
.sq { width: 10px; height: 10px; border: 1.500px solid #d3d8e2; margin-right: 11px; }
.slider { width: 127px; height: 15px; background: linear-gradient(#252c36, #252c36) 0 6px / 126px 2px no-repeat; margin-right: 7px; }
.slider svg { width: 9px; height: 15px; }
.sq.big { width: 14px; height: 14px; margin-left: 4px; }
.tip { position: absolute; left: 71px; top: 65px; width: 349px; height: 84px; border: 2px solid #999; border-radius: 3px; background: linear-gradient(#f1f1f1, #a4a4a4); box-shadow: 2px 2px 3px #0c1018; color: #5c5c5c; padding: 6px 0 0 6px; line-height: 22px; }
.tip b { color: #444; display: block; letter-spacing: -0.15px; }
.tip p { margin: 4px 0 0 6px; width: 336px; white-space: normal; letter-spacing: -0.17px; line-height: 23px; }

/* viewer */
.title { margin-left: 38px; width: 522px; color: #b9c0cd; letter-spacing: -0.1px; }
.br { width: 20px; font-size: 14px; color: #a3abba; }
.tc { width: 113px; font-size: 15px; letter-spacing: 1.250px; color: #a3abba; }
.tcl { width: 22px; font-size: 14px; color: #a3abba; }
.tc.box { width: 107px; height: 25px; border: 2px solid #596273; border-radius: 3px; padding-left: 5px; display: flex; align-items: center; color: #b4bbc8; }
.ric { display: flex; align-items: center; margin-left: 9px; }
.i-exp { width: 22px; height: 15px; margin-right: 16px; }
.ric .i-pop { margin-right: 19px; }
.vtabs { height: 39px; background: #394252; display: flex; }
.vtabs span { width: 224px; display: flex; align-items: center; justify-content: center; font-size: 19px; letter-spacing: -0.15px; padding-bottom: 2px; }
.vtabs .on { width: 226px; background: #303646; color: #f08a14; }
.viewer { height: 470px; background: #303646; }
.video { width: 709px; height: 387px; margin-left: 113px; background: #000; }
.scrub { margin: 15px 0 0 9px; width: 916px; height: 31px; border-left: 1px solid #d9431d; }
.sflag { width: 11px; height: 10px; }
.strip { height: 17px; margin-top: 4px; padding: 4px 0; background: #1d242d; }
.bar { height: 10px; background: #454e60; display: flex; justify-content: space-between; align-items: center; padding: 0 2px; }
.bar i { width: 4px; height: 8px; border: solid #9ca4b2; border-width: 0 1px; }
.bar .dot { width: 3px; height: 3px; background: #9ca4b2; }
.transport { height: 38px; display: flex; align-items: center; }
.p-loop { width: 22px; height: 15px; margin-left: 157px; }
.jog { margin: 0 19px 0 27px; width: 85px; height: 6px; background: linear-gradient(90deg, rgba(48,54,70,.3), transparent 40%, transparent 60%, rgba(48,54,70,.3)), linear-gradient(#ff8a08, #ff8a08) 41px 0 / 4px 2px no-repeat, linear-gradient(#f2ede6, #f2ede6) 30px 0 / 25px 6px no-repeat, repeating-linear-gradient(90deg, #e5e8ed 0 5px, #303646 5px 6px); }
.pc { display: flex; justify-content: center; }
.pc svg { height: 14px; }
.w34b { width: 33.700px; } .w30 { width: 30px; } .w40 { width: 39px; }
.w21 { width: 21px; } .w15 { width: 15px; } .pc .w16 { width: 16px; height: 19px; }
.flip { transform: scaleX(-1); }
.p-vol { width: 18px; height: 15px; margin: 0 4px 0 21px; }
.pip { margin-left: 247px; width: 37px; font-size: 16.500px; }
.p-sc { width: 17px; height: 17px; margin-right: 15px; }
.p-cr { width: 17px; height: 17px; }
.grip { position: absolute; left: 960px; top: 616px; width: 32px; height: 5px; background: radial-gradient(circle, #454e60 1px, transparent 1.500px) 0 0 / 5px 5px; }

/* timeline */
.timeline { margin: 11px 0 0 6px; width: 1908px; height: 397px; flex: none; background: #303646; position: relative; }
.ttools { height: 35px; background: #454e60; display: flex; align-items: center; }
.g1 { width: 23px; height: 17px; margin-left: 20px; }
.g2 { width: 19px; height: 19px; margin: 0 19px 0 22px; }
.g3 { width: 14px; height: 8px; margin-right: 7px; }
.grp { display: flex; align-items: center; }
.grp span { width: 42.600px; display: flex; justify-content: center; }
.a { margin-left: 309px; } .b { margin-left: 301px; } .c { margin-left: 309px; }
.faint { color: #747c8c; }
.tser { font: bold 20px "Liberation Serif", serif; }
.q18 { width: 18px; height: 15px; } .q19 { width: 19px; height: 17px; } .q20 { width: 20px; height: 18px; } .q26 { width: 26px; height: 17px; }
.mk { width: 11px; height: 15px; margin: 0 11px 0 7px; }
.thead { height: 27px; display: flex; align-items: center; padding: 4px 0 0 20px; }
.lock { width: 18px; height: 17px; }
.addt { width: 22px; height: 15px; margin: -4px 0 0 31px; color: #969da9; }
.eye { width: 18px; height: 11px; }
.spk { width: 19px; height: 15px; }
.thead .eye { margin-left: 106px; }
.thead .spk { margin: -5px 0 0 21px; }
.tbody { height: 291px; display: flex; }
.trackarea { width: 1887px; overflow: hidden; border-bottom: 1px solid #1d242d; }
.track { background: linear-gradient(#1d242d, #1d242d) 279px 0 / 1px 100% no-repeat, #394252; border-bottom: 1px solid #1d242d; height: 100px; display: flex; }
.track.movie { border-left: 5px solid #ff8a08; background: linear-gradient(#1d242d, #1d242d) 274px 0 / 1px 100% no-repeat, #5e6471; }
.track.short, .track.cut { height: 62px; }
.th { width: 280px; display: flex; align-items: center; padding-left: 20px; }
.movie .th { padding-left: 15px; }
.th span { width: 127px; margin-left: 30px; letter-spacing: 0; }
.lock.up { margin-bottom: 27px; }
.lock.lo { margin-top: 6px; }
.th .eye { margin-right: 22px; }
.vscroll { width: 21px; display: flex; flex-direction: column; align-items: center; padding: 5px 0 8px; justify-content: space-between; }
.vscroll svg { width: 9px; height: 7px; }
.vscroll i { width: 11px; height: 225px; background: radial-gradient(circle, #6d7586 1px, transparent 2px), #454e60; border-radius: 2px; box-shadow: 1px 1px 2px #1d242d; margin-bottom: 26px; }
.tfoot { height: 44px; display: flex; }
.meter { width: 280px; border-right: 1px solid #1d242d; }
.mscale { width: 280px; height: 32px; }
.mtext { font-size: 12px; fill: #b9c0cd; text-anchor: middle; }
.leds { margin: 0 0 0 20px; width: 238px; height: 12px; display: flex; }
.leds i { height: 12px; background: linear-gradient(transparent 5px, rgba(20,30,30,.5) 5px 6px, transparent 6px); }
.leds .lg { width: 118px; background-color: #1f9d23; }
.leds .ly { width: 90px; background-color: #98962a; }
.leds .lb { width: 24px; background-color: #a5602b; }
.leds .lr { width: 6px; background-color: #b51f28; }
.rulerwrap { width: 1607px; }
.ruler { height: 28px; width: 1607px; overflow: hidden; display: flex; background: repeating-linear-gradient(90deg, #7d8594 0 1px, transparent 1px 133.900px) 1px 0 / 1606px 14px no-repeat, repeating-linear-gradient(90deg, #7d8594 0 1px, transparent 1px 66.950px) 1px 0 / 1606px 5px no-repeat; }
.ruler span { width: 133.900px; text-align: center; font-size: 12px; letter-spacing: -0.3px; padding-top: 4px; color: #b9c0cd; flex: none; }
.ruler .r0 { width: 68px; text-align: left; }
.ruler .r12 { width: 66px; text-align: left; padding-left: 36px; }
.hscroll { height: 10px; display: flex; }
.hscroll b { width: 8px; background: #454e60; display: flex; align-items: center; justify-content: center; color: #778091; }
.hscroll svg { width: 5px; height: 8px; }
.hscroll i { width: 603px; margin-left: 4px; background: #454e60; border: solid #3d4556; border-width: 0 5px; border-radius: 3px; }
.hscroll .hr { margin-left: 967px; color: #e2e5ea; }
.playhead { position: absolute; left: 280px; top: 50px; width: 2px; height: 316px; background: #d04116; }
.playhead svg { width: 12px; height: 11px; }

/* taskbar */
.taskbar { margin-top: 9px; height: 50px; flex: none; display: flex; background: linear-gradient(90deg, #222528 0, #222528 60px, #484848 490px, #484848 1160px, #2e2e2f 1240px, #272829 1340px, #484848 1430px, #484848 1640px, #2b2b2f 1900px); letter-spacing: 0; }
.start { width: 60px; display: flex; align-items: center; justify-content: center; }
.start svg { width: 20px; height: 20px; }
.tsearch { width: 430px; background: #333; border: 1px solid #626262; display: flex; align-items: center; gap: 15px; padding-left: 14px; color: #ddd; font-size: 17px; letter-spacing: -0.3px; }
.tsearch svg { width: 20px; height: 20px; }
.apps { display: flex; }
.apps span { width: 52px; height: 50px; margin-right: 10.150px; display: flex; align-items: center; justify-content: center; position: relative; }
.apps span:first-child { margin-left: 4px; }
.apps .run { border-bottom: 3px solid #7fb6e8; padding-top: 3px; }
.apps .active { width: 61px; margin: 0 0 0 -4px; background: #55575c; }
.ring { width: 19px; height: 19px; border: 3px solid #fff; border-radius: 50%; }
.a26 { width: 26px; height: 26px; } .a28 { width: 28px; height: 28px; } .a24 { width: 24px; height: 24px; } .a30 { width: 30px; height: 30px; } .a23 { width: 24px; height: 24px; }
.ltr { position: absolute; left: 15px; top: 16px; font-size: 12px; line-height: 18px; color: #fff; }
.ltr.ws { left: 17px; top: 14px; font-size: 11px; }
.tray { display: flex; margin-left: 323px; }
.tray span { width: 30px; display: flex; align-items: center; justify-content: center; }
.y1 { width: 16px; height: 9px; } .y2 { width: 20px; height: 16px; } .y3 { width: 19px; height: 11px; } .y4 { width: 16px; height: 16px; } .y5 { width: 20px; height: 16px; }
.clock { width: 84px; display: flex; flex-direction: column; align-items: center; justify-content: center; font-size: 15px; line-height: 23px; letter-spacing: -0.4px; color: #f2f2f2; }
.notif { width: 59px; border-right: 1px solid #999; padding: 15px 0 0 14px; position: relative; }
.notif svg { width: 31px; height: 31px; }
.notif b { position: absolute; left: 30px; top: 25px; font-size: 14px; line-height: 20px; color: #fff; }
```
